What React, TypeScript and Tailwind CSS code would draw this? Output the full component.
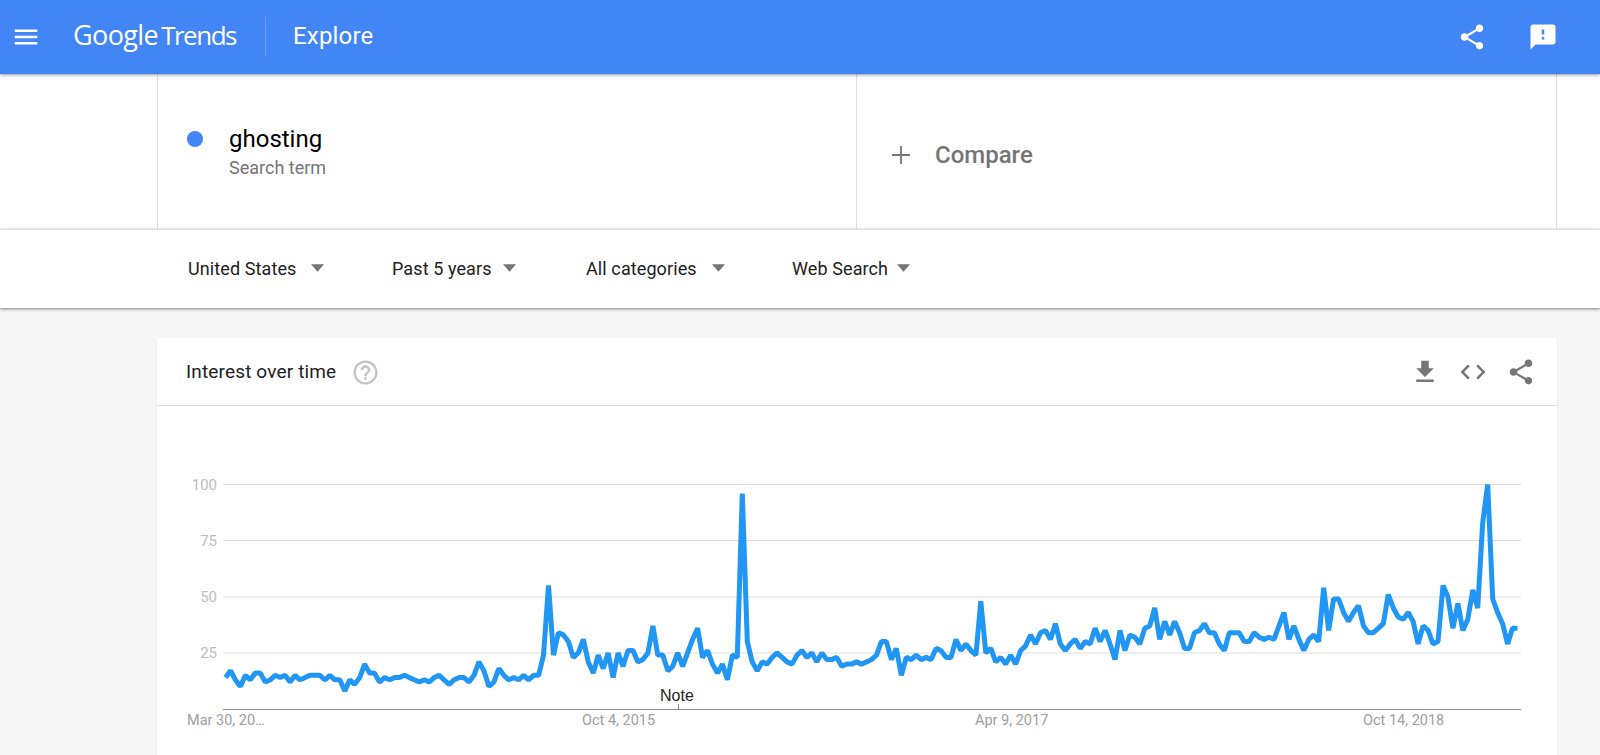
import React from 'react';

// weekly interest values, read off the chart
const interest = [
  14, 17, 13, 10, 15, 13, 16, 16, 12, 13, 15, 14, 15, 12, 15, 13, 14, 15, 15, 15, 13, 15, 13, 13, 8, 13, 11, 14, 20, 16,
  16, 12, 14, 13, 14, 14, 15, 14, 13, 12, 13, 12, 14, 15, 13, 11, 13, 14, 14, 12, 15, 21, 17, 10, 12, 18, 15, 13, 14, 13,
  15, 13, 15, 15, 24, 55, 24, 34, 33, 30, 23, 25, 31, 21, 16, 24, 18, 25, 14, 25, 19, 26, 26, 21, 22, 25, 37, 24, 24, 17,
  19, 25, 19, 25, 31, 36, 23, 26, 20, 16, 20, 13, 24, 23, 96, 30, 21, 17, 21, 20, 23, 25, 23, 21, 20, 24, 26, 23, 25, 21,
  25, 22, 22, 23, 19, 20, 20, 21, 20, 21, 22, 24, 30, 30, 22, 27, 15, 23, 22, 24, 22, 23, 22, 27, 26, 23, 23, 31, 26, 29,
  26, 24, 48, 25, 27, 21, 23, 20, 24, 20, 26, 28, 33, 29, 34, 35, 31, 38, 29, 26, 29, 31, 27, 30, 29, 36, 30, 35, 29, 22,
  35, 26, 33, 32, 29, 36, 37, 45, 31, 39, 33, 39, 34, 27, 27, 34, 35, 38, 34, 34, 29, 26, 34, 34, 34, 30, 30, 34, 32, 31,
  32, 31, 37, 43, 31, 37, 31, 26, 31, 33, 30, 54, 35, 49, 49, 43, 39, 43, 46, 37, 34, 34, 36, 38, 51, 45, 41, 40, 43, 39,
  29, 37, 35, 29, 30, 55, 50, 36, 47, 35, 40, 53, 45, 83, 100, 49, 43, 38, 29, 36, 36,
];

const chartLeft = 225.5;
const chartRight = 1517.5;
const chartZero = 709;
const unit = 2.245;

const linePoints = interest
  .map((v, i) => {
    const x = chartLeft + (i * (chartRight - chartLeft)) / (interest.length - 1);
    return `${x.toFixed(1)},${(chartZero - v * unit).toFixed(1)}`;
  })
  .join(' ');

const icons = {
  menu: 'M3 18h18v-2H3v2zm0-5h18v-2H3v2zm0-7v2h18V6H3z',
  share:
    'M18 16.08c-.76 0-1.44.3-1.96.77L8.91 12.7c.05-.23.09-.46.09-.7s-.04-.47-.09-.7l7.05-4.11c.54.5 1.25.81 2.04.81 1.66 0 3-1.34 3-3s-1.34-3-3-3-3 1.34-3 3c0 .24.04.47.09.7L8.04 9.81C7.5 9.31 6.79 9 6 9c-1.66 0-3 1.34-3 3s1.34 3 3 3c.79 0 1.5-.31 2.04-.81l7.12 4.16c-.05.21-.08.43-.08.65 0 1.61 1.31 2.92 2.92 2.92 1.61 0 2.92-1.31 2.92-2.92s-1.31-2.92-2.92-2.92z',
  feedback: 'M20 2H4c-1.1 0-1.99.9-1.99 2L2 22l4-4h14c1.1 0 2-.9 2-2V4c0-1.1-.9-2-2-2zm-7 12h-2v-2h2v2zm0-4h-2V6h2v4z',
  download: 'M19 9h-4V3H9v6H5l7 7 7-7zM5 18v2h14v-2H5z',
  code: 'M9.4 16.6L4.8 12l4.6-4.6L8 6l-6 6 6 6 1.4-1.4zm5.2 0l4.6-4.6-4.6-4.6L16 6l6 6-6 6-1.4-1.4z',
  help: 'M11 18h2v-2h-2v2zm1-16C6.48 2 2 6.48 2 12s4.48 10 10 10 10-4.48 10-10S17.52 2 12 2zm0 18c-4.41 0-8-3.59-8-8s3.59-8 8-8 8 3.59 8 8-3.59 8-8 8zm0-14c-2.21 0-4 1.79-4 4h2c0-1.1.9-2 2-2s2 .9 2 2c0 2-3 1.75-3 5h2c0-2.25 3-2.5 3-5 0-2.21-1.79-4-4-4z',
};

const Icon = ({ d, className }: { d: string; className: string }) => (
  <svg viewBox="0 0 24 24" className={className} fill="currentColor">
    <path d={d} />
  </svg>
);

const filters = [
  { label: 'United States', box: 'w-[204px]', gap: 'ml-[15px]' },
  { label: 'Past 5 years', box: 'w-[194px]', gap: 'ml-[11px]' },
  { label: 'All categories', box: 'w-[206px]', gap: 'ml-[15px]' },
  { label: 'Web Search', box: 'w-[130px]', gap: 'ml-[9px]' },
];

const gridLines = [
  { label: '100', y: 484.5 },
  { label: '75', y: 540.5 },
  { label: '50', y: 597 },
  { label: '25', y: 653 },
];

const dates = [
  { label: 'Mar 30, 20…', x: 187 },
  { label: 'Oct 4, 2015', x: 582 },
  { label: 'Apr 9, 2017', x: 975 },
  { label: 'Oct 14, 2018', x: 1363 },
];

export default function App() {
  return (
    <div className="h-[755px] overflow-hidden bg-[#f7f7f7] font-['Roboto',sans-serif]">
      <header className="relative z-20 flex h-[74px] items-center bg-[#4285f4] text-white shadow-[0_1px_3px_rgba(0,0,0,0.4)]">
        <Icon d={icons.menu} className="ml-[11px] h-[30px] w-[30px]" />
        <div className="ml-[32px] flex items-baseline pb-[5px] font-['Open_Sans',sans-serif] leading-none">
          <span className="text-[27px] tracking-[-0.6px]">Google</span>
          <span className="ml-[3px] text-[26px] tracking-[-1.5px]">Trends</span>
        </div>
        <div className="ml-[29px] h-[40px] w-px bg-[#6a9ff6]" />
        <div className="ml-[27px] pb-[3px] text-[24px] tracking-[0.2px]">Explore</div>
        <Icon d={icons.share} className="ml-auto h-[30px] w-[30px]" />
        <Icon d={icons.feedback} className="ml-[41px] mr-[42px] h-[30px] w-[30px]" />
      </header>

      <div className="bg-white">
        <div className="ml-[157px] flex h-[155px] w-[1400px] border-x border-[#e0e0e0]">
          <div className="flex w-[699px] items-start border-r border-[#e0e0e0] pl-[29px] pt-[49px]">
            <div className="mt-[8px] h-[16px] w-[16px] rounded-full bg-[#4285f4]" />
            <div className="ml-[26px]">
              <div className="text-[24px] leading-[33px] text-black">ghosting</div>
              <div className="text-[18px] leading-[24px] text-[#757575]">Search term</div>
            </div>
          </div>
          <div className="flex flex-1 items-center pl-[35px] pt-[6px] text-[#757575]">
            <svg viewBox="0 0 18 18" className="h-[18px] w-[18px]" stroke="currentColor" strokeWidth="1.8">
              <path d="M9 0v18M0 9h18" />
            </svg>
            <span className="ml-[25px] text-[24px] font-medium">Compare</span>
          </div>
        </div>
      </div>

      <div className="relative z-10 flex h-[79px] items-center border-t border-[#e0e0e0] bg-white pb-[2px] pl-[188px] shadow-[0_1px_3px_rgba(0,0,0,0.5)]">
        {filters.map((f) => (
          <div key={f.label} className={`flex items-center ${f.box}`}>
            <span className="text-[18px] tracking-[0.1px] text-[#212121]">{f.label}</span>
            <svg viewBox="0 0 14 8" className={`h-[8px] w-[13px] ${f.gap}`} fill="#757575">
              <path d="M0 0h14L7 8z" />
            </svg>
          </div>
        ))}
      </div>

      <section className="ml-[157px] mt-[30px] w-[1400px] bg-white shadow-[0_1px_2px_rgba(0,0,0,0.08)]">
        <div className="flex h-[68px] items-center border-b border-[#e0e0e0] pl-[29px] pt-[1px]">
          <span className="text-[19px] tracking-[0.15px] text-[#212121]">Interest over time</span>
          <Icon d={icons.help} className="ml-[15px] h-[29px] w-[29px] text-[#c4c4c4]" />
          <div className="ml-auto mr-[21px] flex items-center gap-[18px] text-[#757575]">
            <Icon d={icons.download} className="h-[30px] w-[30px]" />
            <Icon d={icons.code} className="h-[30px] w-[30px]" />
            <Icon d={icons.share} className="h-[30px] w-[30px]" />
          </div>
        </div>

        <svg viewBox="157 406 1400 349" className="block h-[349px] w-[1400px]">
          {gridLines.map((g) => (
            <g key={g.label}>
              <line x1="223" x2="1521" y1={g.y} y2={g.y} stroke="#dcdcdc" strokeWidth="1" />
              <text x="217" y={g.y + 5} textAnchor="end" fontSize="15" fill="#bdbdbd" fontFamily="Roboto">
                {g.label}
              </text>
            </g>
          ))}
          <line x1="223" x2="1521" y1="709.5" y2="709.5" stroke="#8c8c8c" strokeWidth="1" />
          <line x1="678.5" x2="678.5" y1="704" y2="709" stroke="#8c8c8c" strokeWidth="1" />
          <text x="660" y="701" fontSize="16" fill="#222222" fontFamily="Liberation Sans">
            Note
          </text>
          {dates.map((d) => (
            <text key={d.label} x={d.x} y="725" fontSize="14.5" fill="#9e9e9e" fontFamily="Roboto">
              {d.label}
            </text>
          ))}
          <polyline points={linePoints} fill="none" stroke="#2196f3" strokeWidth="5" strokeLinejoin="bevel" />
        </svg>
      </section>
    </div>
  );
}
